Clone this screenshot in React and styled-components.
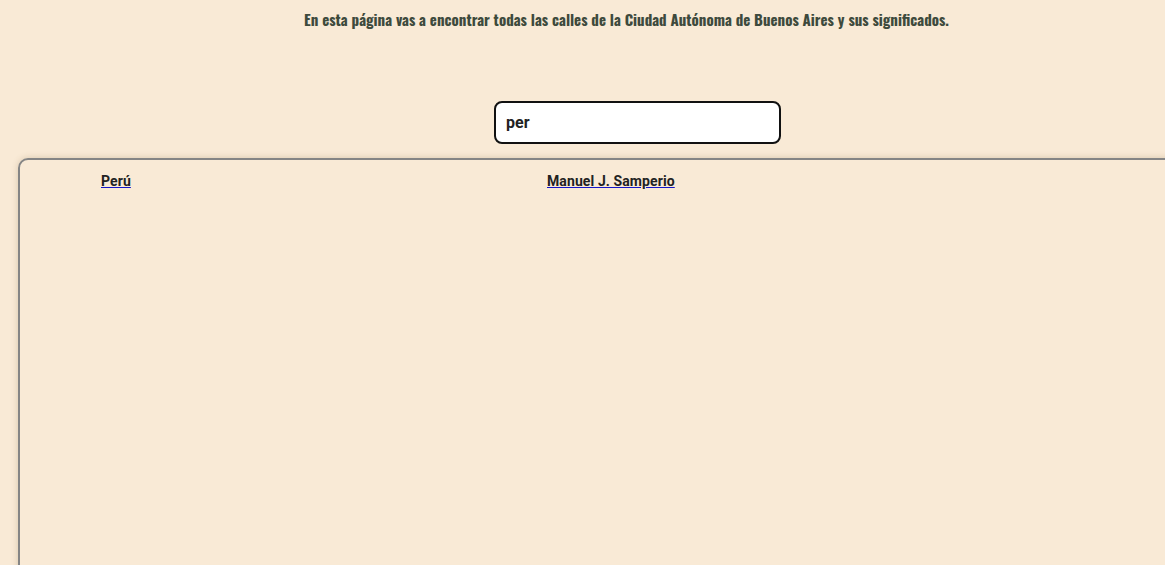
import React from "react"
import styled, { createGlobalStyle } from "styled-components"

const GlobalStyle = createGlobalStyle`
  html, body {
    margin: 0;
    padding: 0;
    background: #f9ead6;
    overflow: hidden;
  }
`

const Page = styled.main`
  display: flex;
  flex-direction: column;
  align-items: flex-start;
  width: 1165px;
  height: 565px;
  overflow: hidden;
  & > * {
    flex-shrink: 0;
  }
`

const Intro = styled.h1`
  margin: 10px 0 0 304px;
  font-family: "Oswald", "DejaVu Sans Condensed", sans-serif;
  font-weight: 700;
  font-size: 15px;
  line-height: 18px;
  color: #3e4a3d;
  white-space: nowrap;
`

const Search = styled.input`
  box-sizing: border-box;
  margin: 73px 0 0 494px;
  width: 287px;
  height: 43px;
  border: 2px solid #111;
  border-radius: 8px;
  background: #fff;
  padding: 0 10px;
  font-family: Roboto, sans-serif;
  font-weight: 700;
  font-size: 16px;
  color: #222;
  outline: none;
`

const Results = styled.section`
  margin: 14px 0 0 18px;
  width: 1200px;
  height: 500px;
  border: 2px solid #858585;
  border-radius: 10px;
  box-shadow: 0 0 6px rgba(120, 90, 50, 0.25);
  display: grid;
  grid-template-columns: repeat(auto-fill, 446px);
  align-content: start;
  padding: 12px 0 0 81px;
  box-sizing: border-box;
`

const Street = styled.a`
  font-family: Roboto, sans-serif;
  font-weight: 700;
  font-size: 14px;
  line-height: 18px;
  letter-spacing: 0.1px;
  color: #222;
  text-decoration: underline;
  text-decoration-color: #1414c8;
  justify-self: start;
`

const streets = ["Perú", "Manuel J. Samperio"]

const App = () => {
  return (
    <>
      <GlobalStyle />
      <Page>
        <Intro>
          En esta página vas a encontrar todas las calles de la Ciudad Autónoma de Buenos Aires y sus significados.
        </Intro>
        <Search defaultValue="per" />
        <Results>
          {streets.map((name) => (
            <Street key={name} href="#">{name}</Street>
          ))}
        </Results>
      </Page>
    </>
  )
}

export default App
